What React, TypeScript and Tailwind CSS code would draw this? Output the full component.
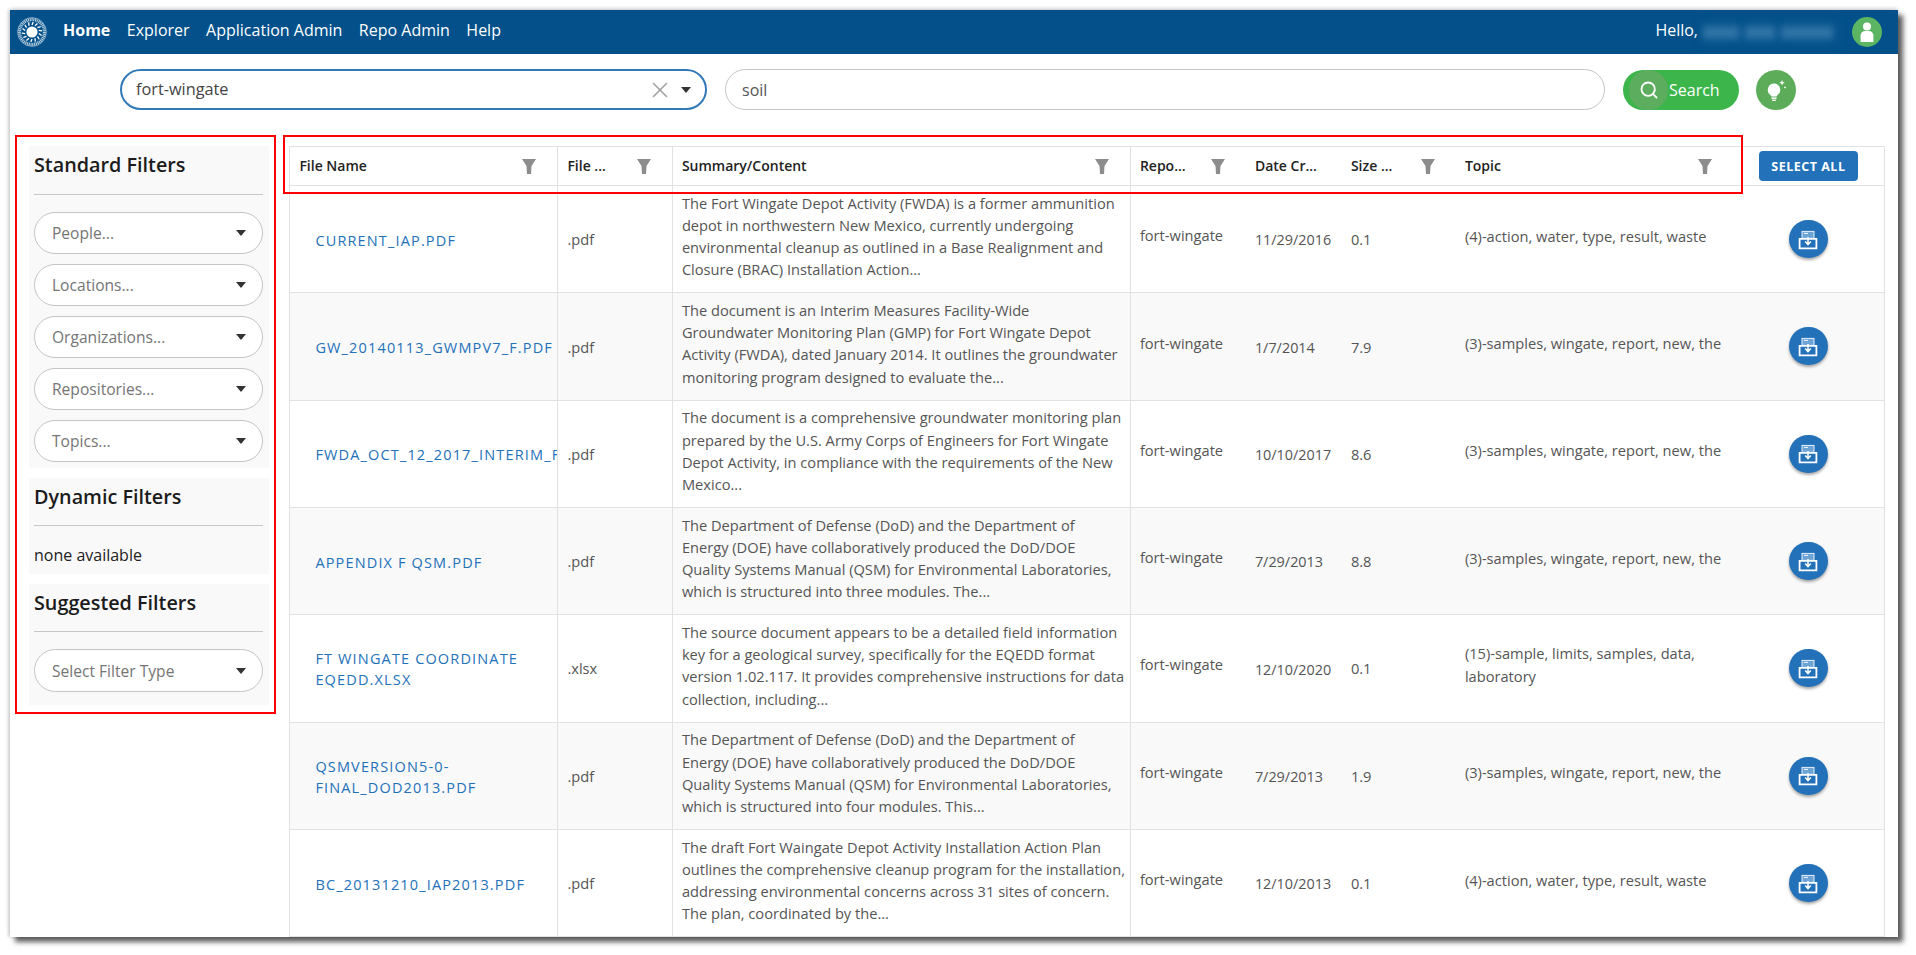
import React from "react";
import { Search, X } from "lucide-react";

const RULE = "border-[#e2e2e2]";
const COLUMNS = "grid grid-cols-[268px_114.5px_458px_115px_96px_114px_277px_153px]";

const FILTERS = ["People...", "Locations...", "Organizations...", "Repositories...", "Topics..."];

const ROWS = [
  {
    name: "CURRENT_IAP.PDF",
    type: ".pdf",
    summary: [
      "The Fort Wingate Depot Activity (FWDA) is a former ammunition",
      "depot in northwestern New Mexico, currently undergoing",
      "environmental cleanup as outlined in a Base Realignment and",
      "Closure (BRAC) Installation Action...",
    ],
    date: "11/29/2016",
    size: "0.1",
    topic: "(4)-action, water, type, result, waste",
  },
  {
    name: "GW_20140113_GWMPV7_F.PDF",
    type: ".pdf",
    summary: [
      "The document is an Interim Measures Facility-Wide",
      "Groundwater Monitoring Plan (GMP) for Fort Wingate Depot",
      "Activity (FWDA), dated January 2014. It outlines the groundwater",
      "monitoring program designed to evaluate the...",
    ],
    date: "1/7/2014",
    size: "7.9",
    topic: "(3)-samples, wingate, report, new, the",
  },
  {
    name: "FWDA_OCT_12_2017_INTERIM_FINAL.PDF",
    type: ".pdf",
    summary: [
      "The document is a comprehensive groundwater monitoring plan",
      "prepared by the U.S. Army Corps of Engineers for Fort Wingate",
      "Depot Activity, in compliance with the requirements of the New",
      "Mexico...",
    ],
    date: "10/10/2017",
    size: "8.6",
    topic: "(3)-samples, wingate, report, new, the",
  },
  {
    name: "APPENDIX F QSM.PDF",
    type: ".pdf",
    summary: [
      "The Department of Defense (DoD) and the Department of",
      "Energy (DOE) have collaboratively produced the DoD/DOE",
      "Quality Systems Manual (QSM) for Environmental Laboratories,",
      "which is structured into three modules. The...",
    ],
    date: "7/29/2013",
    size: "8.8",
    topic: "(3)-samples, wingate, report, new, the",
  },
  {
    name: "FT WINGATE COORDINATE EQEDD.XLSX",
    type: ".xlsx",
    summary: [
      "The source document appears to be a detailed field information",
      "key for a geological survey, specifically for the EQEDD format",
      "version 1.02.117. It provides comprehensive instructions for data",
      "collection, including...",
    ],
    date: "12/10/2020",
    size: "0.1",
    topic: "(15)-sample, limits, samples, data, laboratory",
  },
  {
    name: "QSMVERSION5-0-FINAL_DOD2013.PDF",
    type: ".pdf",
    summary: [
      "The Department of Defense (DoD) and the Department of",
      "Energy (DOE) have collaboratively produced the DoD/DOE",
      "Quality Systems Manual (QSM) for Environmental Laboratories,",
      "which is structured into four modules. This...",
    ],
    date: "7/29/2013",
    size: "1.9",
    topic: "(3)-samples, wingate, report, new, the",
  },
  {
    name: "BC_20131210_IAP2013.PDF",
    type: ".pdf",
    summary: [
      "The draft Fort Waingate Depot Activity Installation Action Plan",
      "outlines the comprehensive cleanup program for the installation,",
      "addressing environmental concerns across 31 sites of concern.",
      "The plan, coordinated by the...",
    ],
    date: "12/10/2013",
    size: "0.1",
    topic: "(4)-action, water, type, result, waste",
  },
];

function Caret() {
  return (
    <svg width="10" height="6" viewBox="0 0 10 6" className="shrink-0">
      <path d="M0 0h10L5 6z" fill="#333333" />
    </svg>
  );
}

function Funnel() {
  return (
    <svg width="14" height="15" viewBox="0 0 14 15" className="shrink-0">
      <path d="M0 0h14L9.5 7 9 15H5L4.5 7z" fill="#8c8c8c" />
    </svg>
  );
}

function Logo() {
  const rays = Array.from({ length: 14 }, (_, i) => (i * 360) / 14);
  return (
    <svg width="30" height="30" viewBox="0 0 30 30" className="shrink-0">
      <circle cx="15" cy="15" r="14.4" fill="none" stroke="#9dbdd3" strokeWidth="0.8" />
      <circle cx="15" cy="15" r="12.4" fill="none" stroke="#b9d0e0" strokeWidth="3" strokeDasharray="1.1 0.7" />
      <circle cx="15" cy="15" r="5.6" fill="#ffffff" />
      {rays.map((deg) => (
        <line
          key={deg}
          x1="15"
          y1="8"
          x2="16.2"
          y2="4.9"
          stroke="#ffffff"
          strokeWidth="1.3"
          transform={`rotate(${deg} 15 15)`}
        />
      ))}
    </svg>
  );
}

function TrayIcon() {
  return (
    <svg width="20" height="21" viewBox="0 0 20 21" fill="none">
      <rect x="4" y="2.4" width="12" height="7" fill="#6ea3d6" stroke="#e6f0f9" strokeWidth="1" />
      <path d="M6 4.4h4" stroke="#ffffff" strokeWidth="0.9" />
      <path d="M1.6 9.8h16.8v9.6H1.6z" fill="#2271b9" stroke="#ffffff" strokeWidth="1.8" />
      <path d="M10 8v7.4M7.2 12.6l2.8 3 2.8-3" stroke="#ffffff" strokeWidth="1.5" />
    </svg>
  );
}

function BulbIcon() {
  return (
    <svg width="22" height="24" viewBox="0 0 22 24" fill="#ffffff">
      <path d="M9 5.5a6.3 6.3 0 0 0-3.6 11.4c.6.5.9 1 .9 1.6h5.4c0-.6.3-1.1.9-1.6A6.3 6.3 0 0 0 9 5.5z" />
      <rect x="6.4" y="19.4" width="5.2" height="1.5" />
      <rect x="7.2" y="21.6" width="3.6" height="1.4" />
      <path d="M17 2l.8 2 2 .8-2 .8-.8 2-.8-2-2-.8 2-.8z" />
      <circle cx="20" cy="9.4" r="0.9" />
    </svg>
  );
}

function FilterSelect({ label, tall }: { label: string; tall?: boolean }) {
  return (
    <div
      className={`flex items-center justify-between pl-[17px] pr-[16px] rounded-full border border-[#c4c4c4] bg-white text-[#757575] text-[15.6px] ${
        tall ? "h-[43px]" : "h-[42px]"
      }`}
    >
      <span className="pt-[2px]">{label}</span>
      <Caret />
    </div>
  );
}

function PanelTitle({ children, first }: { children: React.ReactNode; first?: boolean }) {
  return (
    <div
      className={`border-b border-[#c8c8c8] text-[19.8px] leading-[38px] font-semibold text-[#1c1c1c] ${
        first ? "h-[49px]" : "h-[48px]"
      }`}
    >
      {children}
    </div>
  );
}

function HeaderCell({ label, funnel = true, rule }: { label: string; funnel?: boolean; rule?: boolean }) {
  return (
    <div
      className={`flex items-center justify-between pl-[9px] pr-[21px] text-[14px] font-semibold text-[#222222] ${
        rule ? `border-r ${RULE}` : ""
      }`}
    >
      <span className="pb-[2px] whitespace-nowrap">{label}</span>
      {funnel && <Funnel />}
    </div>
  );
}

export default function App() {
  return (
    <div className="h-[955px] w-[1916px] overflow-hidden bg-white pt-[10px] pl-[10px] font-['Open_Sans',sans-serif]">
      <div className="relative flex h-[927px] w-[1888px] flex-col bg-white shadow-[5px_5px_5px_rgba(40,40,40,0.75),0_-2px_4px_rgba(0,0,0,0.12),-2px_0_3px_rgba(0,0,0,0.15)]">
        {/* top bar */}
        <header className="flex h-[44px] shrink-0 items-center justify-between bg-[#03508a] pl-[7px] pr-[16px] text-white">
          <div className="flex items-center">
            <Logo />
            <nav className="ml-[16px] flex items-center gap-[16.5px] pb-[5px] text-[16px]">
              <span className="font-bold">Home</span>
              <span>Explorer</span>
              <span>Application Admin</span>
              <span>Repo Admin</span>
              <span>Help</span>
            </nav>
          </div>
          <div className="flex items-center">
            <span className="pb-[5px] text-[16px]">Hello,</span>
            <div className="ml-[2px] flex h-[25px] w-[140px] items-center gap-[6px] bg-[#07548d] px-[3px] blur-[3px]">
              <span className="h-[13px] w-[36px] bg-[#2f72a6]" />
              <span className="h-[13px] w-[30px] bg-[#2f72a6]" />
              <span className="h-[13px] w-[52px] bg-[#2f72a6]" />
            </div>
            <div className="ml-[12px] flex h-[30px] w-[30px] items-center justify-center rounded-full bg-[#5cb562]">
              <svg width="14" height="20" viewBox="0 0 14 20" fill="#ffffff">
                <circle cx="7" cy="4.4" r="4" />
                <path d="M0.6 20v-6.4A4.6 4.6 0 0 1 5.2 9h3.6a4.6 4.6 0 0 1 4.6 4.6V20z" />
              </svg>
            </div>
          </div>
        </header>

        {/* search row */}
        <div className="mt-[15px] flex h-[41px] shrink-0 items-center pl-[110px]">
          <div className="flex h-full w-[587px] items-center rounded-full border-2 border-[#3279b8] pl-[14px] pr-[14px] text-[16.3px] text-[#444444]">
            <span className="flex-1">fort-wingate</span>
            <X size={26} strokeWidth={1.5} className="mr-[8px] text-[#a0a0a0]" />
            <Caret />
          </div>
          <div className="ml-[18px] flex h-full w-[880px] items-center rounded-full border border-[#c4c4c4] pl-[16px] text-[16px] text-[#555555]">
            soil
          </div>
          <div className="ml-[18px] flex h-[40px] w-[116px] items-center rounded-full bg-[#3cb54a] pl-[6px] text-[16px] text-white">
            <span className="flex h-[40px] w-[39px] items-center justify-center rounded-full bg-[#5cad5e]">
              <Search size={20} strokeWidth={2.2} />
            </span>
            <span className="ml-[1px]">Search</span>
          </div>
          <div className="ml-[17px] flex h-[40px] w-[40px] items-center justify-center rounded-full bg-[#5cac5a]">
            <BulbIcon />
          </div>
        </div>

        {/* filters and results */}
        <div className="mt-[36px] flex min-h-0 flex-1">
          <aside className="ml-[18.6px] flex w-[240px] shrink-0 flex-col gap-[10px]">
            <section className="bg-[#f9f9f9] px-[5.4px] pb-[6px]">
              <PanelTitle first>Standard Filters</PanelTitle>
              <div className="mt-[17px] flex flex-col gap-[10px]">
                {FILTERS.map((f) => (
                  <FilterSelect key={f} label={f} />
                ))}
              </div>
            </section>
            <section className="bg-[#f9f9f9] px-[5.4px] pb-[9px]">
              <PanelTitle>Dynamic Filters</PanelTitle>
              <div className="mt-[19px] text-[16px] leading-[20px] text-[#222222]">none available</div>
            </section>
            <section className="bg-[#f9f9f9] px-[5.4px] pb-[13px]">
              <PanelTitle>Suggested Filters</PanelTitle>
              <div className="mt-[17px]">
                <FilterSelect label="Select Filter Type" tall />
              </div>
            </section>
          </aside>

          <main className={`ml-[20.8px] w-[1596px] shrink-0 overflow-hidden border-x ${RULE}`}>
            <div className={`${COLUMNS} h-[40px] border-y ${RULE}`}>
              <HeaderCell label="File Name" rule />
              <HeaderCell label="File ..." rule />
              <HeaderCell label="Summary/Content" rule />
              <HeaderCell label="Repo..." />
              <HeaderCell label="Date Cr..." funnel={false} />
              <HeaderCell label="Size ..." />
              <HeaderCell label="Topic" />
              <div className="flex items-center justify-center pr-[2px]">
                <span className="flex h-[30px] w-[99px] items-center justify-center rounded-[4px] bg-[#2271b9] pt-[3px] text-[12.5px] font-bold tracking-[0.5px] text-white">
                  SELECT ALL
                </span>
              </div>
            </div>

            {ROWS.map((row, i) => (
              <div
                key={row.name}
                className={`${COLUMNS} h-[107.33px] border-b ${RULE} text-[14.65px] text-[#555555] ${
                  i % 2 === 1 ? "bg-[#f9f9f9]" : "bg-white"
                }`}
              >
                <div className={`flex items-center overflow-hidden border-r ${RULE} pt-[2px] pl-[25px]`}>
                  <span className="text-[14.5px] leading-[21px] font-medium tracking-[1.15px] text-[#2271b9]">
                    {row.name}
                  </span>
                </div>
                <div className={`flex items-center border-r ${RULE} pt-[2px] pl-[9px]`}>{row.type}</div>
                <div className={`flex items-center border-r ${RULE} pb-[6px] pl-[9px]`}>
                  <div className="leading-[22.3px] whitespace-nowrap">
                    {row.summary.map((line) => (
                      <div key={line}>{line}</div>
                    ))}
                  </div>
                </div>
                <div className="flex items-center pb-[6px] pl-[9px]">fort-wingate</div>
                <div className="flex items-center pt-[2px] pl-[9px] text-[14.4px]">{row.date}</div>
                <div className="flex items-center pt-[2px] pl-[9px]">{row.size}</div>
                <div className="flex items-center pb-[6px] pl-[9px] pr-[8px] leading-[23px]">{row.topic}</div>
                <div className="flex items-center justify-center pr-[2px]">
                  <span className="flex h-[38px] w-[39px] items-center justify-center rounded-full bg-[#2271b9] shadow-[0_2px_3px_rgba(0,0,0,0.35)]">
                    <TrayIcon />
                  </span>
                </div>
              </div>
            ))}
          </main>
        </div>

        {/* red annotation boxes drawn over the screenshot */}
        <div className="pointer-events-none absolute top-[125px] left-[5px] h-[579px] w-[261px] border-2 border-[#ff0000]" />
        <div className="pointer-events-none absolute top-[125px] left-[273px] h-[59px] w-[1460px] border-2 border-[#ff0000]" />
      </div>
    </div>
  );
}
